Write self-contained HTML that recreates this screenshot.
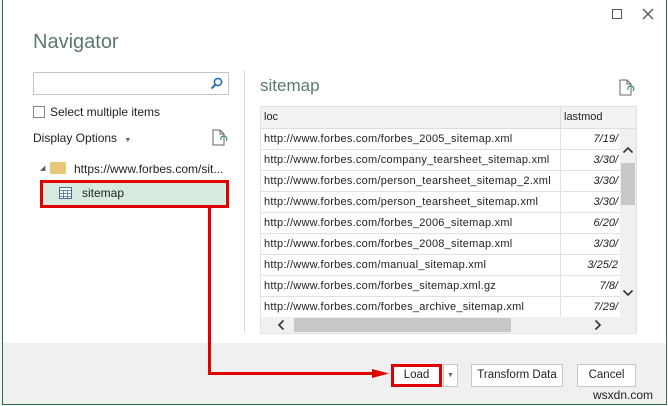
<!DOCTYPE html>
<html><head><style>
*{margin:0;padding:0;box-sizing:border-box}
body{width:668px;height:406px;overflow:hidden;background:#fff;font-family:"Liberation Sans",sans-serif;position:relative;font-size:12px;color:#222}
.a{position:absolute}
.row{position:absolute;left:261px;width:359px;height:21px;border-bottom:1px solid #e0e0e0;font-size:11px;line-height:21px}
.row .l{position:absolute;left:3px;letter-spacing:0.25px}
.row .r{position:absolute;left:299px;width:60px;height:21px;border-left:1px solid #e0e0e0;text-align:right;padding-right:2px;font-style:italic;overflow:hidden}
.btn{position:absolute;top:364px;height:23px;border:1px solid #c8c8c8;background:#fff;font-size:11.5px;line-height:21px;text-align:center}
</style></head><body>
<div class="a" style="left:0;top:0;width:3px;height:406px;background:#f4f4f4"></div>
<div class="a" style="left:2px;top:0;width:665px;height:405px;border:1px solid #2e6b44;border-top:none"></div>
<div class="a" style="left:3px;top:343px;width:662px;height:61px;background:#f0f0f0"></div>
<div class="a" style="left:612px;top:9px;width:10px;height:10px;border:1.3px solid #555"></div>
<svg class="a" style="left:642px;top:8px" width="12" height="12"><path d="M1 1L11 11M11 1L1 11" stroke="#555" stroke-width="1.3"/></svg>
<div class="a" style="left:33px;top:31px;font-size:20px;color:#5c7a6a">Navigator</div>
<div class="a" style="left:33px;top:72px;width:196px;height:23px;border:1px solid #c6c6c6"></div>
<svg class="a" style="left:210px;top:77px" width="13" height="13"><circle cx="8" cy="5" r="3.6" fill="none" stroke="#2a6db5" stroke-width="1.6"/><path d="M5.5 7.5L1.5 11.5" stroke="#2a6db5" stroke-width="2"/></svg>
<div class="a" style="left:33px;top:106px;width:12px;height:12px;border:1px solid #888"></div>
<div class="a" style="left:50px;top:105px;font-size:12px">Select multiple items</div>
<div class="a" style="left:33px;top:131px;font-size:12px">Display Options <span style="font-size:7px;color:#666;margin-left:4px">▼</span></div>
<svg class="a" style="left:212px;top:129px" width="16" height="18"><path d="M1 1H8L12 5V16H1Z" fill="none" stroke="#666"/><path d="M8 1V5H12" fill="none" stroke="#666"/><path d="M9 11a3 3 0 1 1 5 1" fill="none" stroke="#3a8a5a" stroke-width="1.2"/></svg>
<div class="a" style="left:40px;top:164px;font-size:7px;color:#555">◢</div>
<div class="a" style="left:50px;top:162px;width:16px;height:12px;background:#e8c67a;border-radius:1px"></div>
<div class="a" style="left:74px;top:162px;font-size:12px">https://www.forbes.com/sit...</div>
<div class="a" style="left:40px;top:180px;width:189px;height:28px;background:#d7ebdf;border:3px solid #e00000"></div>
<svg class="a" style="left:59px;top:187px" width="13" height="12"><rect x=".5" y=".5" width="12" height="11" fill="#fff" stroke="#4a6da0"/><path d="M.5 3.5H12.5M.5 6.5H12.5M.5 9.5H12.5M4.5 3.5V11.5M8.5 3.5V11.5" stroke="#4a6da0" stroke-width=".8"/></svg>
<div class="a" style="left:82px;top:186px;font-size:12px">sitemap</div>
<div class="a" style="left:244px;top:70px;width:1px;height:263px;background:#d8d8d8"></div>
<div class="a" style="left:260px;top:76px;font-size:17px;color:#5c7a6a">sitemap</div>
<svg class="a" style="left:619px;top:79px" width="16" height="18"><path d="M1 1H8L12 5V16H1Z" fill="none" stroke="#666"/><path d="M8 1V5H12" fill="none" stroke="#666"/><path d="M9 11a3 3 0 1 1 5 1" fill="none" stroke="#3a8a5a" stroke-width="1.2"/></svg>
<div class="a" style="left:260px;top:106px;width:377px;height:228px;border:1px solid #e0e0e0;background:#fff"></div>
<div class="a" style="left:261px;top:107px;width:375px;height:22px;background:#f3f3f3;border-bottom:1px solid #ddd;font-size:11px;line-height:21px"><span style="position:absolute;left:3px">loc</span><span style="position:absolute;left:299px;border-left:1px solid #ddd;height:21px;padding-left:3px">lastmod</span></div>
<div class="row" style="top:129px"><span class="l">http://www.forbes.com/forbes_2005_sitemap.xml</span><span class="r">7/19/</span></div>
<div class="row" style="top:150px"><span class="l">http://www.forbes.com/company_tearsheet_sitemap.xml</span><span class="r">3/30/</span></div>
<div class="row" style="top:171px"><span class="l">http://www.forbes.com/person_tearsheet_sitemap_2.xml</span><span class="r">3/30/</span></div>
<div class="row" style="top:192px"><span class="l">http://www.forbes.com/person_tearsheet_sitemap.xml</span><span class="r">3/30/</span></div>
<div class="row" style="top:213px"><span class="l">http://www.forbes.com/forbes_2006_sitemap.xml</span><span class="r">6/20/</span></div>
<div class="row" style="top:234px"><span class="l">http://www.forbes.com/forbes_2008_sitemap.xml</span><span class="r">3/30/</span></div>
<div class="row" style="top:255px"><span class="l">http://www.forbes.com/manual_sitemap.xml</span><span class="r">3/25/2</span></div>
<div class="row" style="top:276px"><span class="l">http://www.forbes.com/forbes_sitemap.xml.gz</span><span class="r">7/8/</span></div>
<div class="row" style="top:297px;border-bottom:none"><span class="l">http://www.forbes.com/forbes_archive_sitemap.xml</span><span class="r">7/29/</span></div>
<div class="a" style="left:620px;top:129px;width:16px;height:188px;background:#f0f0f0"></div>
<div class="a" style="left:621px;top:163px;width:14px;height:42px;background:#c8c8c8"></div>
<svg class="a" style="left:622px;top:146px" width="12" height="8"><path d="M1.5 6.5L6 2L10.5 6.5" fill="none" stroke="#333" stroke-width="1.6"/></svg>
<svg class="a" style="left:622px;top:289px" width="12" height="8"><path d="M1.5 1.5L6 6L10.5 1.5" fill="none" stroke="#333" stroke-width="1.6"/></svg>
<div class="a" style="left:261px;top:317px;width:375px;height:16px;background:#f0f0f0"></div>
<div class="a" style="left:294px;top:318px;width:217px;height:14px;background:#c8c8c8"></div>
<svg class="a" style="left:277px;top:319px" width="8" height="12"><path d="M6.5 1.5L2 6L6.5 10.5" fill="none" stroke="#333" stroke-width="1.6"/></svg>
<svg class="a" style="left:594px;top:319px" width="8" height="12"><path d="M1.5 1.5L6 6L1.5 10.5" fill="none" stroke="#333" stroke-width="1.6"/></svg>
<div class="btn" style="left:391px;width:51px;border:3px solid #e00000;line-height:17px">Load</div>
<div class="btn" style="left:443px;width:15px;font-size:7px;color:#666">▼</div>
<div class="btn" style="left:471px;width:92px">Transform Data</div>
<div class="btn" style="left:577px;width:59px">Cancel</div>
<div class="a" style="left:208px;top:208px;width:3px;height:167px;background:#e00000"></div>
<div class="a" style="left:208px;top:372px;width:168px;height:3px;background:#e00000"></div>
<svg class="a" style="left:372px;top:367px" width="17" height="13"><path d="M0 2L17 6.5L0 11Z" fill="#e00000"/></svg>
<div class="a" style="left:593px;top:388px;font-size:12px;color:#222">wsxdn.com</div>
</body></html>
